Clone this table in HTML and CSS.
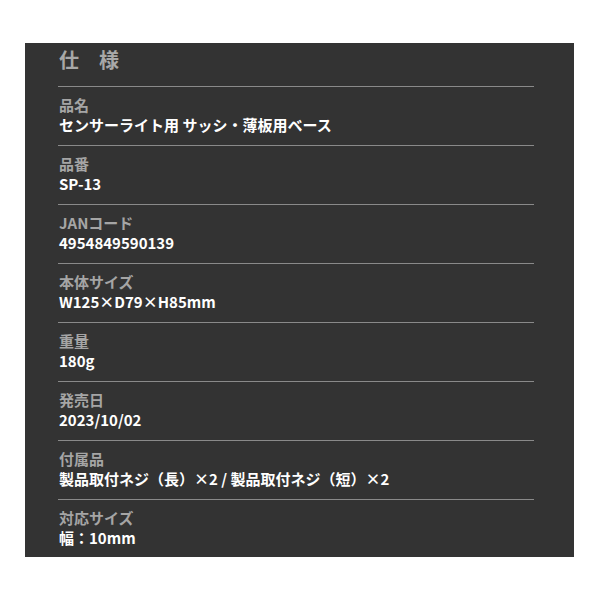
FILE: index.html
```html
<!DOCTYPE html>
<html lang="ja">
<head>
<meta charset="utf-8">
<link rel="stylesheet" href="styles.css">
</head>
<body>
<section class="spec">
  <h2 class="spec-title">仕　様</h2>
  <dl class="spec-list">
    <div class="spec-row"><dt>品名</dt><dd>センサーライト用 サッシ・薄板用ベース</dd></div>
    <div class="spec-row"><dt>品番</dt><dd>SP-13</dd></div>
    <div class="spec-row"><dt>JANコード</dt><dd>4954849590139</dd></div>
    <div class="spec-row"><dt>本体サイズ</dt><dd>W125×D79×H85mm</dd></div>
    <div class="spec-row"><dt>重量</dt><dd>180g</dd></div>
    <div class="spec-row"><dt>発売日</dt><dd>2023/10/02</dd></div>
    <div class="spec-row"><dt>付属品</dt><dd>製品取付ネジ（長）×2 / 製品取付ネジ（短）×2</dd></div>
    <div class="spec-row"><dt>対応サイズ</dt><dd>幅：10mm</dd></div>
  </dl>
</section>
</body>
</html>
```
FILE: styles.css
```css
html, body {
  margin: 0;
  padding: 0;
  background: #ffffff;
}
body {
  padding: 43px 0 0 25px;
  font-family: "Noto Sans CJK JP", "Noto Sans", sans-serif;
}
.spec {
  width: 549px;
  height: 514px;
  box-sizing: border-box;
  background: #333333;
  padding: 2px 40px 0 33px;
}
.spec-title {
  margin: 0 0 11px 1px;
  font-size: 20px;
  line-height: 30px;
  font-weight: bold;
  color: #a8a8a8;
}
.spec-list {
  margin: 0;
}
.spec-row {
  border-top: 1px solid #8a8a8a;
  padding: 8px 0 10px 1px;
}
.spec-row dt {
  font-size: 15px;
  line-height: 20px;
  font-weight: bold;
  color: #a5a5a5;
}
.spec-row dd {
  margin: 0;
  font-size: 15px;
  line-height: 20px;
  font-weight: bold;
  color: #ffffff;
}
```
